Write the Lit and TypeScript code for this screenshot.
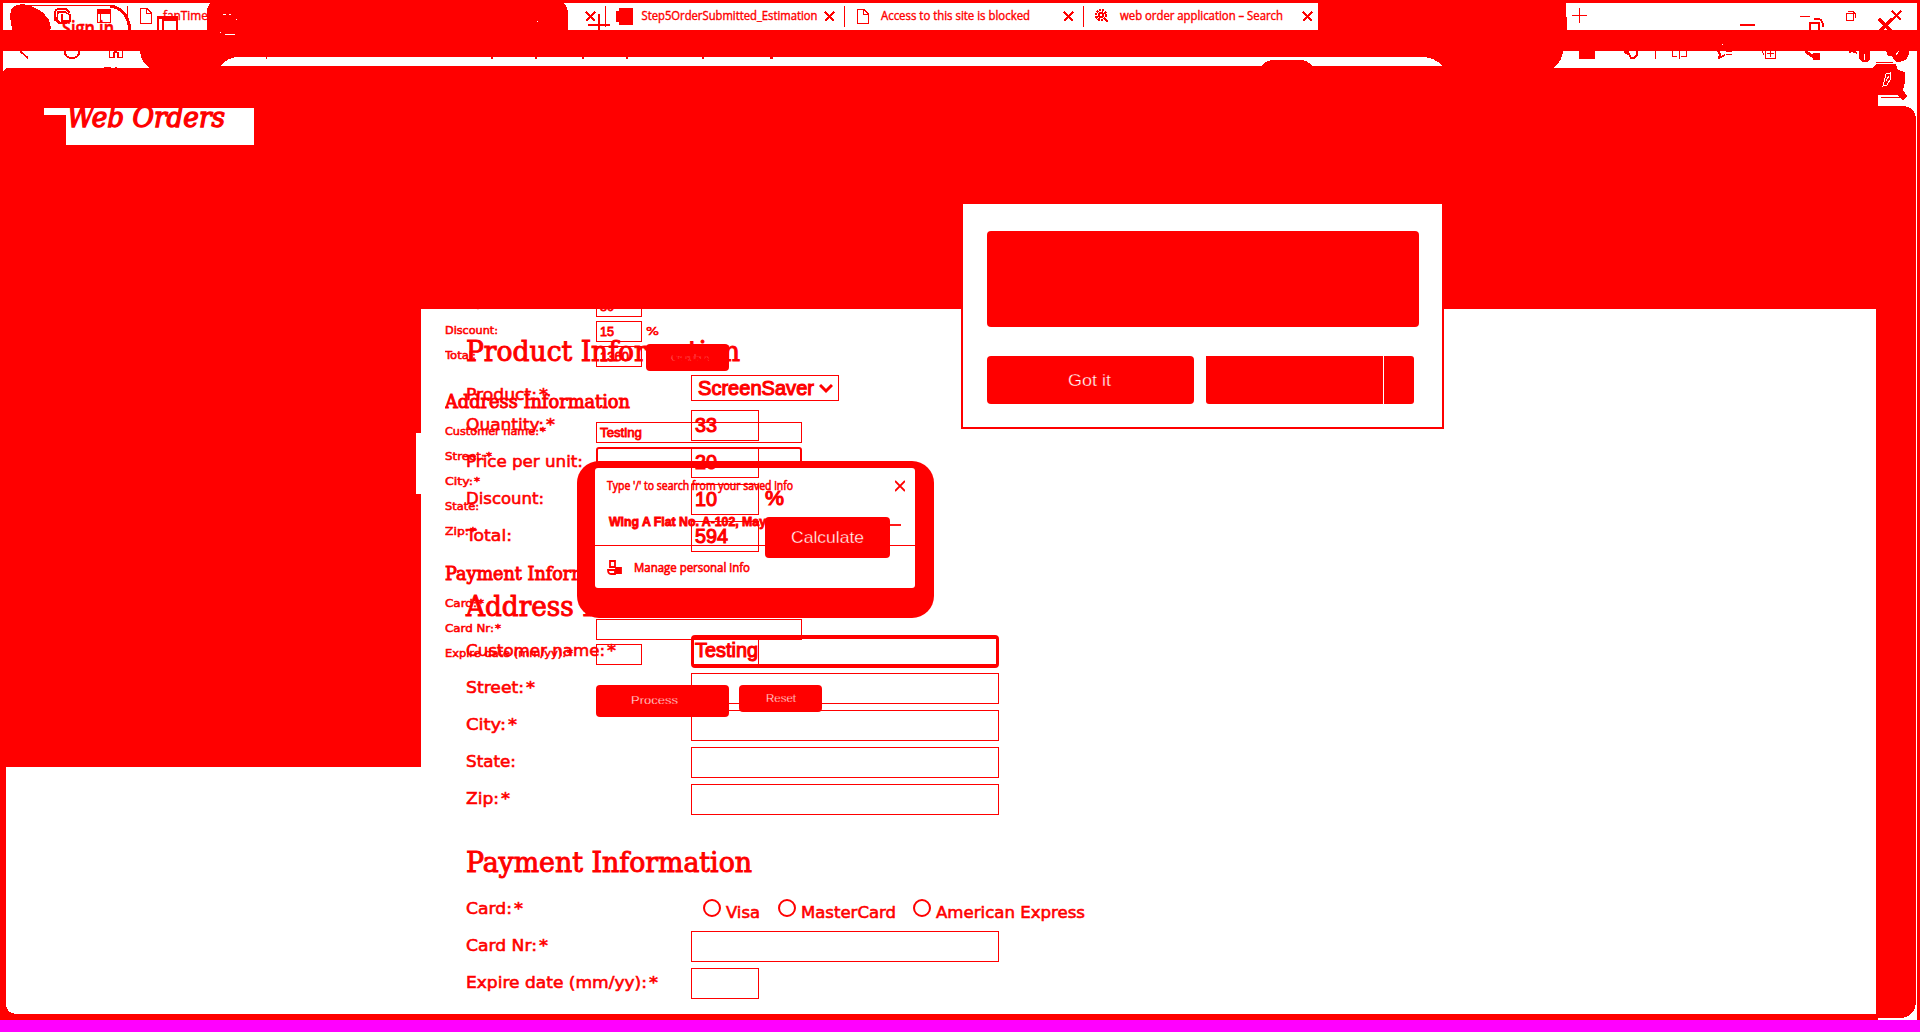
import { LitElement, html, svg, css, nothing, type TemplateResult } from "lit";
import { customElement } from "lit/decorators.js";

type Field = { label: string; w: number; kind?: string; value?: string; vw?: number; fieldWidth?: number; baseline?: number };

/** One line of text, fitted to a given width on a given baseline. */
const line = (text: string, w: number, baseline: number, h: number, cls: string) => html`
  <svg class="line" width=${w} height=${h}><text class=${cls} x="0" y=${baseline} textLength=${w} lengthAdjust="spacingAndGlyphs">${text}</text></svg>`;

const tabText = (text: string, x: number, y: number, w: number, cls = "tab") =>
  svg`<text class=${cls} x=${x} y=${y} textLength=${w} lengthAdjust="spacingAndGlyphs">${text}</text>`;

const cross = (x: number, y: number, s: number, sw: number) =>
  svg`<path d="M${x} ${y}l${s} ${s}M${x + s} ${y}l${-s} ${s}" stroke-width=${sw}/>`;

const sheet = css`
  .line { display: block; overflow: visible; }
  text { fill: #f00; stroke: #f00; stroke-width: 0.6px; white-space: pre; }
  .label { font: 16.5px "DejaVu Sans", sans-serif; }
  .label-s { font: 11px "DejaVu Sans", sans-serif; stroke-width: 0.55px; }
  .head { font: 28px "DejaVu Serif Condensed", "DejaVu Serif", serif; stroke-width: 0.9px; }
  .head-s { font: 18.5px "DejaVu Serif Condensed", "DejaVu Serif", serif; stroke-width: 0.9px; }
  .val { font: 20px "Liberation Sans", Arial, sans-serif; stroke-width: 1.1px; }
  .val-s { font: 13.3px "Liberation Sans", Arial, sans-serif; stroke-width: 0.8px; }
  .btn { font: 16.5px "Liberation Sans", Arial, sans-serif; fill: #fff; stroke: #f00; stroke-width: 0.35px; }
  .btn-s { font: 11px "Liberation Sans", Arial, sans-serif; fill: #fff; stroke: #f00; stroke-width: 0.3px; }
  .btn-xs { font: 9px "Liberation Sans", Arial, sans-serif; fill: #fff; stroke: #f00; stroke-width: 0.6px; }
`;

@customElement("wo-backdrop")
class Backdrop extends LitElement {
  static styles = css`
    :host { display: block; }
    svg { display: block; }
    text { fill: #f00; stroke: #f00; stroke-width: 0.4px; }
    .tab { font: 12px "Open Sans", "Noto Sans", sans-serif; }
    .sign { font: 600 20px "Open Sans", sans-serif; stroke-width: 0.6px; }
    .brand { font: italic 28px "DejaVu Serif Condensed", "DejaVu Serif", serif; stroke-width: 1.3px; }
  `;
  render() {
    return html`<svg width="1920" height="1032" viewBox="0 0 1920 1032" shape-rendering="crispEdges">
      <rect width="1920" height="1032" fill="#f00"/>
      <path fill="#fff" d="M3 3H211Q207 6 207 12V30H3ZM563 3H1318V30H568V12Q567 5 563 3ZM1566 3H1917V30H1567Z"/>
      <path fill="#fff" d="M3 51H140Q141 63 150 68H8Q5 68 3 72ZM1563 51H1917V340H1916V118Q1914 106 1902 106H1878V68H1553Q1562 62 1563 51Z"/>
      <path fill="#fff" d="M221 66Q228 57 238 57H1422Q1434 57 1443 66H1312Q1308 60 1300 60H1274Q1266 60 1262 66Z"/>
      <path fill="#fff" d="M44 108H254V145H66V115H44Z"/>
      <path fill="#fff" d="M421 309H1876V1014H18Q6 1014 6 1003V767H421V494H416V433H421Z"/>
      <path fill="#fff" d="M1916 118H1917V1020H1878V1018H1898Q1916 1018 1916 1000Z"/>
      <rect y="1020" width="1920" height="12" fill="#f0f"/>

      <g fill="none" stroke="#f00" stroke-width="1">
        <path d="M13 30Q9 17 12 9Q17 4 25 5Q41 9 46 17Q51 22 50 30Z" fill="#f00"/>
        <path d="M25 5.5H112" />
        <path d="M110 6Q125 8 129 24V30" stroke-width="3"/>
        <path d="M55 14Q54 9 60 9H66L70 13M58 12H65L70 15V21L66 23H60L57 19ZM62 14V21H69M55 14V20L59 23" stroke-width="1.600"/>
        <path d="M97.500 10.500H110.500V22.500H97.500ZM100.500 14V22M97 13H111"/>
        <path d="M97 11H111" stroke-width="4"/>
        <path d="M127.500 6V25M140.500 8.500H147L151.500 13V23.500H140.500ZM146.500 8.500V13.500H151.500"/>
        <path d="M157.500 30V16.500H176.500V30M157 18H177M162.500 20V30M162 20H177" stroke-width="2"/>
        <path d="M20 51L28 58M64.500 51Q65 58 72 58Q79 58 79.500 51M109.500 51V57.500H114V53Q116 51 118 53V57.500H122.500V51" stroke-width="1.800"/>
        <path d="M104 67.500H111M115 67.500H117"/>
        <path d="M605.500 6V27M844.500 6V27M1083.500 6V27"/>
        <path d="M588 25H610M599 14V30" stroke-width="2"/>
        ${cross(586, 12, 9, 1.8)}${cross(825, 12, 9, 1.8)}${cross(1064, 12, 9, 1.8)}${cross(1303, 12, 9, 1.8)}
        <path d="M619 8H632V24H619V21H616V11H619Z" fill="#f00"/>
        <path d="M857.500 9.500H864L868.500 14V23.500H857.500ZM863.500 9V14.500H869"/>
        <circle cx="1101" cy="15" r="5" stroke-width="2.500" stroke-dasharray="2 1"/><circle cx="1101" cy="15" r="2" stroke-width="2"/><path d="M1104 18L1108 22" stroke-width="2"/>
        <path d="M1572 15.500H1587M1579.500 8V23M1800 16.500H1810M1846.500 13.500H1853.500V20.500H1846.500ZM1848 11.500H1853L1855.500 14V18"/>
        <path d="M1740 25H1755M1810 30V23H1819V30M1814 19H1819Q1823 20 1823 27" stroke-width="2"/>
        ${cross(1879, 19, 13, 3)}${cross(1892, 11, 9, 1.8)}
        <path d="M1579 51H1595V59H1579Z" fill="#f00" stroke="none"/>
        <path d="M1624.500 51Q1625 54 1629 54L1631 58H1634L1637 55V51M1625 52H1629" stroke-width="1.500"/>
        <path d="M1655.500 51V59M1672.500 51V56.500H1677M1681 56.500H1686.500V51M1679.500 51V59"/>
        <path d="M1718 51L1720 54L1719 58L1725 55" stroke-width="2"/>
        <path d="M1726 51.500H1732M1726 54.500H1732"/>
        <path d="M1762 51L1764 55M1765.500 51V58.500H1775.500V51M1770.500 51V57M1767 53.500H1774"/>
        <path d="M1805 51L1815 58" stroke-width="3"/>
        <path d="M1813 53H1820V60H1813Z" fill="#f00" stroke="none"/>
        <path d="M1849 52L1852 51L1857 53" stroke-width="2"/>
        <path d="M1859 51H1870V59L1867 62H1862L1859 59Z" fill="#f00" stroke="none"/>
        <path d="M1864.500 54V60" stroke="#fff"/>
        <path d="M1886 51H1909Q1909 62 1897 62Q1893 60 1892 56H1888Z" fill="#f00" stroke="none"/>
        <path d="M1896 55L1899 51" stroke="#fff"/>
        <path d="M1872 68L1876 64H1896L1898 70L1905 72L1905 82L1903 90L1907 96L1903 100L1897 95L1878 95V68Z" fill="#f00" stroke="none"/>
        <path d="M1883 86L1886 74L1890 73L1890 80L1887 85ZM1886 81L1889 76" stroke="#fff"/>
        <path d="M1881 97.500H1900M1876 62.500H1893"/>
        <path d="M217 56.500H218M266 58H267M491 58H493M535 58H537M582 58H584M626 58H628M702 58H704M770 58H773" stroke-width="2"/>
      </g>
      ${tabText("fanTime", 163, 20, 45)}
      ${tabText("Step5OrderSubmitted_Estimation", 641.5, 20, 176)}
      ${tabText("Access to this site is blocked", 881, 20, 149)}
      ${tabText("web order application – Search", 1120, 20, 163)}
      ${tabText("Sign in", 62, 35, 52, "sign")}
      ${tabText("Web Orders", 67, 127, 158, "brand")}
      <path fill="#f00" d="M0 30H1920V51H0ZM207 12H568V57H207ZM60 90H260V108H60Z"/>
      <path fill="none" stroke="#fff" d="M223 14.500H226M229 14.500H231M225 34.500H235M236 19.500H237M220 32.500H221M537 21.500H538M1722 44.500H1723"/>
    </svg>`;
  }
}

@customElement("wo-form")
class OrderForm extends LitElement {
  static properties = { small: { type: Boolean, reflect: true } };
  declare small: boolean;
  static styles = [sheet, css`
    :host { display: block; }
    .row { display: grid; grid-template-columns: 225px auto; height: 37px; align-items: start; }
    .caption { display: flex; gap: 2px; }
    .cell { display: flex; align-items: flex-start; gap: 6px; }
    .field { box-sizing: border-box; height: 31px; border: 1px solid #f00; padding-left: 3px; }
    .field.select { height: 26px; display: flex; padding-left: 6px; gap: 5px; }
    .field.focus { height: 33px; margin: -1px 0 0; border: 3px solid #f00; border-width: 4px 3px; border-radius: 4px; padding-left: 1px; display: flex; }
    .caret { width: 1px; height: 25px; background: #f00; }
    .chev { margin-top: 8px; fill: none; stroke: #f00; stroke-width: 3; }
    .button { background: #f00; border-radius: 4px; width: 125px; height: 41px; margin-top: -4px; padding-left: 26px; box-sizing: border-box; }
    .choices { display: flex; padding-left: 12px; }
    .choice { display: grid; grid-template-columns: 23px auto; }
    .ring { box-sizing: border-box; width: 18px; height: 18px; border: 2px solid #f00; border-radius: 50%; margin-top: 5px; }
    :host([small]) .row { grid-template-columns: 151px auto; height: 25px; }
    :host([small]) .caption { gap: 1px; }
    :host([small]) .cell { gap: 4px; }
    :host([small]) .field { height: 21px; }
    :host([small]) .field.focus { border: 2px solid #f00; border-radius: 3px; margin: 0; }
    :host([small]) .button { width: 83px; height: 27px; margin-top: -2px; padding-left: 25px; }
    :host([small]) .button.process { width: 133px; height: 32px; margin: 0; padding-left: 35px; }
    :host([small]) .button.reset { margin: 0; padding-left: 27px; }
    .lead { margin-top: -12px; }
    .actions { display: flex; gap: 10px; padding: 16px 0 0 151px; }
  `];

  row(f: Field): TemplateResult {
    const s = this.small;
    const first = f.kind === "select";
    const value = f.value
      ? line(f.value, f.vw!, s ? 13.5 : first ? 18.5 : f.kind === "focus" ? 18 : 20.5, s ? 18 : 25, s ? "val-s" : "val")
      : nothing;
    const field = html`<div class="field ${f.kind === "select" || f.kind === "focus" ? f.kind : ""}" style="width:${f.fieldWidth ?? (s ? 206 : 308)}px">${value}${first
      ? html`<svg class="chev" width="14" height="10"><path d="M1 1L7 7L13 1"/></svg>`
      : f.kind === "focus" && !s ? html`<span class="caret"></span>` : nothing}</div>`;
    const required = f.label.endsWith("*");
    const star = s ? 6 : 9;
    const gap = s ? 1 : 2;
    const y = f.baseline ?? (s ? 13 : first ? 25 : 19.5);
    const cls = s ? "label-s" : "label";
    return html`<div class="row" style="height:${s ? 25 : first ? 35 : 37}px">
      <div class="caption">
        ${line(required ? f.label.slice(0, -1) : f.label, required ? f.w - star - gap : f.w, y, s ? 22 : 31, cls)}
        ${required ? line("*", star, y, s ? 22 : 31, cls) : nothing}
      </div>
      <div class="cell">
        ${f.kind === "cards" ? this.cards() : field}
        ${f.kind === "percent" ? line("%", s ? 13 : 19, s ? 14 : 21, 20, s ? "label-s" : "val") : nothing}
        ${f.kind === "total" ? html`<div class="button">${line("Calculate", s ? 38 : 73, s ? 17 : 26, 20, s ? "btn-xs" : "btn")}</div>` : nothing}
      </div>
    </div>`;
  }

  cards() {
    if (this.small) return nothing;
    const items = [["Visa", 34, 75], ["MasterCard", 95, 135], ["American Express", 149, 175]] as const;
    return html`<div class="choices">${items.map(([n, w, box]) => html`
      <div class="choice" style="width:${box}px"><span class="ring"></span>${line(n, w, 23.5, 30, "label")}</div>`)}</div>`;
  }

  render() {
    if (this.small) {
      return html`
        <div class="lead">
          ${this.row({ label: "Price per unit:", w: 80, value: "80", vw: 14, fieldWidth: 46, baseline: 11 })}
          ${this.row({ label: "Discount:", w: 53, value: "15", vw: 14, fieldWidth: 46, kind: "percent" })}
          ${this.row({ label: "Total:", w: 31, value: "1360", vw: 29, fieldWidth: 46, kind: "total" })}
        </div>
        ${line("Address Information", 185, 37, 51, "head-s")}
        ${this.row({ label: "Customer name:*", w: 101, value: "Testing", vw: 42 })}
        ${this.row({ label: "Street:*", w: 47, kind: "focus" })}
        ${this.row({ label: "City:*", w: 35 })}
        ${this.row({ label: "State:", w: 34 })}
        ${this.row({ label: "Zip:*", w: 31 })}
        ${line("Payment Information", 188, 33, 47, "head-s")}
        ${this.row({ label: "Card:*", w: 39, kind: "cards" })}
        ${this.row({ label: "Card Nr:*", w: 56 })}
        ${this.row({ label: "Expire date (mm/yy):*", w: 128, fieldWidth: 46 })}
        <div class="actions">
          <div class="button process">${line("Process", 47, 19, 20, "btn-s")}</div>
          <div class="button reset">${line("Reset", 30, 17, 20, "btn-s")}</div>
        </div>`;
    }
    return html`
      ${line("Product Information", 274, 25.5, 40, "head")}
      ${this.row({ label: "Product:*", w: 82, kind: "select", value: "ScreenSaver", vw: 116, fieldWidth: 148 })}
      ${this.row({ label: "Quantity:*", w: 89, value: "33", vw: 22, fieldWidth: 68 })}
      ${this.row({ label: "Price per unit:", w: 117, value: "20", vw: 22, fieldWidth: 68 })}
      ${this.row({ label: "Discount:", w: 78, value: "10", vw: 22, fieldWidth: 68, kind: "percent" })}
      ${this.row({ label: "Total:", w: 46, value: "594", vw: 33, fieldWidth: 68, kind: "total" })}
      ${line("Address Information", 274, 57.5, 78, "head")}
      ${this.row({ label: "Customer name:*", w: 150, value: "Testing", vw: 63, kind: "focus" })}
      ${this.row({ label: "Street:*", w: 69 })}
      ${this.row({ label: "City:*", w: 51 })}
      ${this.row({ label: "State:", w: 50 })}
      ${this.row({ label: "Zip:*", w: 44 })}
      ${line("Payment Information", 286, 51, 73, "head")}
      ${this.row({ label: "Card:*", w: 57, kind: "cards" })}
      ${this.row({ label: "Card Nr:*", w: 82 })}
      ${this.row({ label: "Expire date (mm/yy):*", w: 192, fieldWidth: 68 })}`;
  }
}

@customElement("wo-autofill")
class Autofill extends LitElement {
  static styles = [sheet, css`
    :host { display: block; box-sizing: border-box; width: 357px; height: 157px; background: #f00; border-radius: 22px; padding: 7px 19px 30px 18px; }
    .panel { background: #fff; height: 120px; border-radius: 3px; }
    .top { height: 77px; border-bottom: 1px solid #f00; box-sizing: content-box; }
    .hint, .entry, .manage { display: flex; justify-content: space-between; }
    .hint { padding: 9px 10px 0 12px; height: 28px; }
    .entry { padding: 4px 14px 0 14px; }
    .manage { justify-content: flex-start; gap: 11px; padding: 13px 12px; }
    .seg { font: 12px "Open Sans", "Noto Sans", sans-serif; stroke-width: 0.6px; }
    .name { font: bold 13px "Liberation Sans", sans-serif; stroke-width: 0.9px; }
    .ico { fill: none; stroke: #f00; stroke-width: 1.8; }
    .solid { fill: #f00; }
  `];
  render() {
    return html`<div class="panel">
      <div class="top">
        <div class="hint">${line("Type '/' to search from your saved info", 186, 13, 18, "seg")}
          <svg class="ico" width="10" height="20"><path d="M0 4L10 14M10 4L0 14"/></svg></div>
        <div class="entry">${line("Wing A Flat No. A-102, May", 157, 17, 18, "name")}
          <svg class="ico" width="12" height="20"><path d="M0 16H12"/></svg></div>
      </div>
      <div class="manage">
        <svg class="ico" width="16" height="18"><path d="M3 2H8V8H3ZM1 11H8V15H4Q1 15 1 11Z"/><path class="solid" d="M9 9H14V14H9Z"/></svg>
        ${line("Manage personal info", 116, 13, 18, "seg")}
      </div>
    </div>`;
  }
}

@customElement("wo-notice")
class Notice extends LitElement {
  static styles = [sheet, css`
    :host { display: block; box-sizing: border-box; width: 483px; height: 227px; background: #fff; border: 2px solid #f00; padding: 27px 23px 0 24px; }
    .banner { height: 96px; background: #f00; border-radius: 4px; }
    .actions { display: flex; margin-top: 29px; }
    .ok { box-sizing: border-box; width: 207px; height: 48px; background: #f00; border-radius: 4px; padding-left: 81px; margin-right: 12px; }
    .more { width: 177px; height: 48px; background: #f00; border-bottom-left-radius: 3px; margin-right: 1px; }
    .split { width: 30px; height: 48px; background: #f00; border-radius: 0 3px 3px 0; }
  `];
  render() {
    return html`<div class="banner"></div>
      <div class="actions"><div class="ok">${line("Got it", 43, 30, 40, "btn")}</div><div class="more"></div><div class="split"></div></div>`;
  }
}

@customElement("app-root")
class AppRoot extends LitElement {
  static styles = css`
    :host { display: block; position: relative; width: 1920px; height: 1032px; overflow: hidden; background: #f00; }
    .layer { position: absolute; }
    .first { left: 445px; top: 308px; width: 420px; height: 420px; overflow: hidden; }
    .popup { left: 577px; top: 461px; }
    .second { left: 466px; top: 335px; width: 640px; }
    .notice { left: 961px; top: 202px; }
  `;
  render() {
    return html`
      <wo-backdrop></wo-backdrop>
      <div class="layer first"><wo-form small></wo-form></div>
      <wo-autofill class="layer popup"></wo-autofill>
      <wo-form class="layer second"></wo-form>
      <wo-notice class="layer notice"></wo-notice>`;
  }
}
